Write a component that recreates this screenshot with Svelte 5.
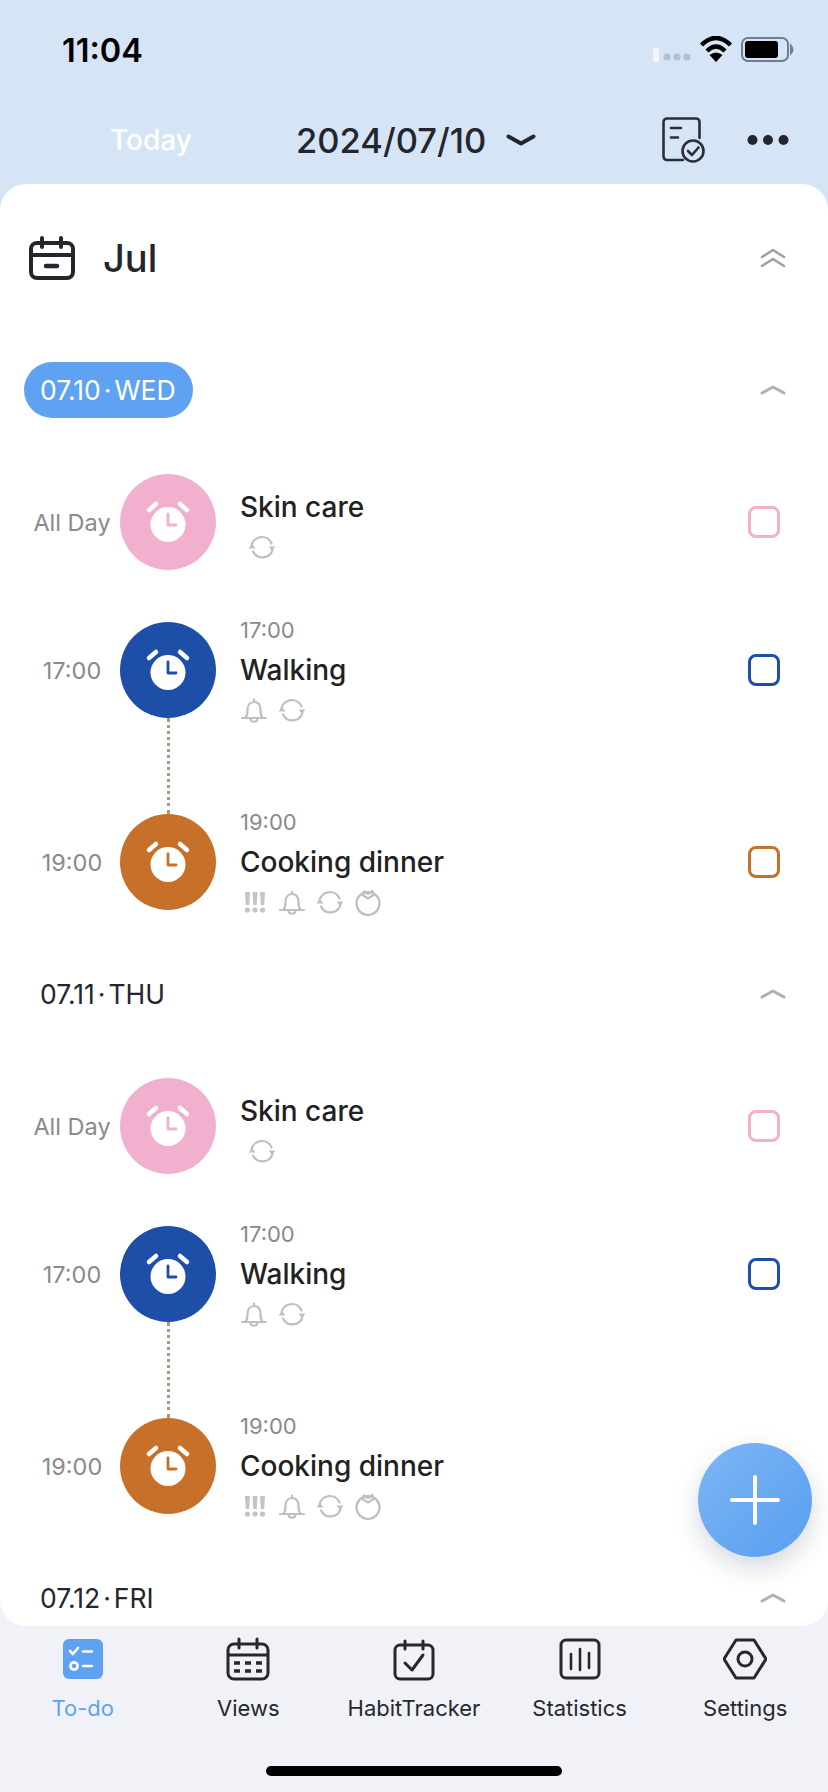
<script>
  const rows = [
    { label: 'All Day', title: 'Skin care', color: '#f2b0cf', icons: ['sync'] },
    { label: '17:00', time: '17:00', title: 'Walking', color: '#1e4fa8', icons: ['bell', 'sync'], linked: true },
    { label: '19:00', time: '19:00', title: 'Cooking dinner', color: '#c6702a', icons: ['urgent', 'bell', 'sync', 'tomato'] }
  ];

  const days = [
    { date: '07.10', day: 'WED', active: true, rows },
    { date: '07.11', day: 'THU', rows },
    { date: '07.12', day: 'FRI', rows: [] }
  ];

  const tabs = ['To-do', 'Views', 'HabitTracker', 'Statistics', 'Settings'];
</script>

{#snippet smallIcon(name)}
  <svg width="28" height="28" viewBox="0 0 28 28" fill="none" stroke="#bfbfbf" stroke-width="2.2" stroke-linecap="round" stroke-linejoin="round">
    {#if name === 'sync'}
      <path d="M3.5 12.5A10.5 10.5 0 0 1 23.5 10.5" />
      <path d="M24.5 17A10.5 10.5 0 0 1 5 18.5" />
      <path d="M20.5 13.5h7l-3.5 4.5z" fill="#bfbfbf" stroke="none" />
      <path d="M0.5 15.5h7l-3.5-4.5z" fill="#bfbfbf" stroke="none" />
    {:else if name === 'bell'}
      <path d="M2 22H26M5.5 22C7 20 7.5 17 7.5 14C7.5 9 10 6 14 6C18 6 20.5 9 20.5 14C20.5 17 21 20 22.5 22M10.5 22C10.5 27 17.5 27 17.5 22M14 3.5V6" />
    {:else if name === 'urgent'}
      <g fill="#c4c4c4" stroke="none">
        <path d="M5 4h5l-.8 13h-3.4zM12.500 4h5l-.8 13h-3.4zM20 4h5l-.8 13h-3.4z" />
        <circle cx="7.500" cy="22" r="2.600" /><circle cx="15" cy="22" r="2.600" /><circle cx="22.500" cy="22" r="2.600" />
      </g>
    {:else}
      <circle cx="14" cy="15.500" r="11.500" />
      <path d="M8.500 7L10 3.500L14 6L18.500 3L19.500 7L14 10.500z" />
    {/if}
  </svg>
{/snippet}

{#snippet tabIcon(name)}
  <svg width="44" height="44" viewBox="0 0 44 44" fill="none" stroke="#26282e" stroke-width="3" stroke-linecap="round" stroke-linejoin="round">
    {#if name === 'To-do'}
      <rect x="2" y="2" width="40" height="40" rx="6" fill="#5fa2f2" stroke="none" />
      <g stroke="#fff" stroke-width="2.600">
        <path d="M9 14l3 3 5-6M22 14.500h9" />
        <circle cx="13" cy="29" r="3.600" />
        <path d="M22 29h9" />
      </g>
    {:else if name === 'Views'}
      <rect x="2" y="7" width="40" height="35" rx="6" />
      <path d="M13 2v9M31 2v9M3 18h38" />
      <path d="M8 26h6M19 26h6M30 26h6M8 34h6M19 34h6M30 34h6" stroke-width="3.400" stroke-linecap="butt" />
    {:else if name === 'HabitTracker'}
      <rect x="3" y="8" width="38" height="34" rx="5" />
      <path d="M13 4v8M31 4v8M13 26l7 7 11-15" />
    {:else if name === 'Statistics'}
      <rect x="3" y="3" width="38" height="38" rx="5" />
      <path d="M13 17v15M22 12v21M31 16v15" stroke-width="2.600" />
    {:else}
      <path d="M13 3H31L43 22L31 41H13L1 22z" />
      <circle cx="22" cy="22" r="7" />
    {/if}
  </svg>
{/snippet}

<div class="page">
  <div class="status">
    <span class="clock">11:04</span>
    <svg width="141" height="26" viewBox="653 36 141 26">
      <rect x="653" y="48" width="6" height="14" rx="2" fill="#f2f6fb" />
      <circle cx="667" cy="57" r="3.600" fill="#b3c0cf" />
      <circle cx="677" cy="57" r="3.600" fill="#b3c0cf" />
      <circle cx="687" cy="57" r="3.600" fill="#b3c0cf" />
      <g fill="none" stroke="#000" stroke-width="4.400">
        <path d="M701.500 45Q716 31 730.500 45" />
        <path d="M707 51Q716 42 725 51" />
      </g>
      <path d="M709.500 55Q716 50 722.500 55L716 62z" />
      <rect x="742" y="38" width="46" height="23" rx="6" fill="none" stroke="#6f7f92" stroke-width="2" />
      <rect x="745" y="41" width="33" height="17" rx="3" />
      <path d="M791 46q3 3.500 0 7z" fill="#6f7f92" stroke="#6f7f92" stroke-width="2" />
    </svg>
  </div>

  <div class="topbar">
    <span class="today">Today</span>
    <span class="date">2024/07/10</span>
    <svg class="date-arrow" width="30" height="12" viewBox="0 0 30 12" fill="none" stroke="#23262e" stroke-width="4" stroke-linecap="round" stroke-linejoin="round">
      <path d="M2.500 2.500L15 9.500L27.500 2.500" />
    </svg>
    <svg class="doc" width="44" height="46" viewBox="0 0 44 46" fill="none" stroke="#2a2e36" stroke-width="2.600" stroke-linecap="round" stroke-linejoin="round">
      <path d="M21 43H5A3.500 3.500 0 0 1 1.500 39.500V5A3.500 3.500 0 0 1 5 1.500H34A3.500 3.500 0 0 1 37.500 5V21" />
      <path d="M9 11h10M9 20.500h7" />
      <circle cx="31" cy="34" r="10.500" />
      <path d="M26 34l4 4 6.500-7.500" />
    </svg>
    <svg class="more" width="42" height="12" viewBox="0 0 42 12" fill="#23262e">
      <circle cx="5.500" cy="6" r="5" /><circle cx="21" cy="6" r="5" /><circle cx="36.500" cy="6" r="5" />
    </svg>
  </div>

  <div class="sheet">
    <div class="month">
      <svg width="48" height="44" viewBox="0 0 48 44" fill="none" stroke="#23262e" stroke-width="4" stroke-linecap="round" stroke-linejoin="round">
        <rect x="3" y="7" width="42" height="35" rx="6" />
        <path d="M14 2v9M33 2v9M3 19h42" />
        <path d="M18 30h11" stroke-width="4.500" />
      </svg>
      <span class="month-name">Jul</span>
      <svg class="chev" width="26" height="20" viewBox="0 0 26 20" fill="none" stroke="#a0a0a0" stroke-width="2.600" stroke-linecap="round" stroke-linejoin="round">
        <path d="M2 9L13 2L24 9M2 18L13 11L24 18" />
      </svg>
    </div>

    {#each days as d}
      <section class="day">
        <div class="day-head">
          <span class="day-label" class:active={d.active}>{d.date}<i>·</i>{d.day}</span>
          <svg class="chev" width="26" height="10" viewBox="0 0 26 10" fill="none" stroke="#b0b0b0" stroke-width="3" stroke-linecap="round" stroke-linejoin="round">
            <path d="M2 8L13 2L24 8" />
          </svg>
        </div>

        {#each d.rows as r}
          <div class="row">
            <span class="row-label">{r.label}</span>
            <div class="bubble" style="background:{r.color}">
              <svg width="96" height="96" viewBox="0 0 96 96" fill="none" stroke-linecap="round">
                <path d="M29 36L36 30M67 36L60 30" stroke="#fff" stroke-width="4.500" />
                <circle cx="48" cy="50.500" r="17.500" fill="#fff" />
                <path d="M48 40V51H56" stroke={r.color} stroke-width="2.800" stroke-linejoin="round" />
              </svg>
            </div>
            <div class="text" class:plain={!r.time}>
              {#if r.time}<span class="time">{r.time}</span>{/if}
              <span class="title">{r.title}</span>
              <div class="marks" class:indent={!r.time}>
                {#each r.icons as name}
                  {@render smallIcon(name)}
                {/each}
              </div>
            </div>
            <span class="check" style="border-color:{r.color}"></span>
          </div>
          {#if r.linked}
            <div class="link"></div>
          {/if}
        {/each}
      </section>
    {/each}
  </div>

  <nav class="tabs">
    {#each tabs as t, i}
      <div class="tab" class:on={i === 0}>
        {@render tabIcon(t)}
        <span>{t}</span>
      </div>
    {/each}
  </nav>
  <div class="home"><span></span></div>

  <button class="fab" aria-label="Add">
    <svg width="52" height="52" viewBox="0 0 52 52" stroke="#fff" stroke-width="4" stroke-linecap="round">
      <path d="M26 3V49M3 26H49" />
    </svg>
  </button>
</div>

<style>
  :global(body) {
    margin: 0;
  }

  .page {
    position: relative;
    width: 828px;
    height: 1792px;
    display: flex;
    flex-direction: column;
    overflow: hidden;
    font-family: Inter, "Noto Sans", sans-serif;
    color: #23262e;
    background: linear-gradient(#d6e5f6 50%, #f0f2f7 50%);
  }

  .status {
    height: 96px;
    flex: none;
    display: flex;
    justify-content: space-between;
    align-items: flex-start;
    box-sizing: border-box;
    padding: 35px 34px 0 62px;
  }

  .status svg {
    margin-top: 1px;
  }

  .clock {
    font-size: 32.500px;
    line-height: 32px;
    font-weight: 600;
    color: #000;
  }

  .topbar {
    height: 88px;
    flex: none;
    display: flex;
    align-items: center;
    padding: 0 39px 0 110px;
  }

  .today {
    width: 186px;
    font-size: 28px;
    font-weight: 500;
    color: #fff;
  }

  .date {
    font-size: 34.500px;
    font-weight: 500;
  }

  .date-arrow {
    margin-left: 20px;
  }

  .doc {
    margin-left: auto;
    margin-right: 41px;
  }

  .sheet {
    flex: 1;
    min-height: 0;
    overflow: hidden;
    background: #fff;
    border-radius: 26px;
    padding: 0 42px 0 24px;
  }

  .month {
    margin: 44px 0 74px 4px;
    height: 60px;
    display: flex;
    align-items: center;
    gap: 27px;
  }

  .month-name {
    font-size: 38px;
    font-weight: 500;
    color: #23262e;
  }

  .chev {
    margin-left: auto;
    flex: none;
  }

  .day {
    margin-bottom: 56px;
  }

  .day-head {
    height: 56px;
    margin-bottom: 56px;
    display: flex;
    align-items: center;
  }

  .day-label {
    height: 56px;
    line-height: 56px;
    padding: 0 17px 0 16px;
    border-radius: 28px;
    font-size: 26.500px;
    color: #23262e;
  }

  .day-label i {
    font-style: normal;
    margin: 0 3px;
  }

  .day-label.active {
    background: #5fa2f2;
    color: #fff;
  }

  .row {
    height: 96px;
    display: flex;
    align-items: center;
  }

  .row + .row {
    margin-top: 52px;
  }

  .row-label {
    width: 96px;
    flex: none;
    text-align: center;
    font-size: 23.500px;
    color: #8a8a8a;
  }

  .bubble {
    width: 96px;
    height: 96px;
    flex: none;
    border-radius: 50%;
  }

  .bubble svg {
    display: block;
  }

  .text {
    flex: 1;
    margin-left: 24px;
    display: flex;
    flex-direction: column;
    align-items: flex-start;
  }

  .text.plain {
    padding-top: 9px;
  }

  .time,
  .title,
  .marks {
    height: 40px;
    line-height: 40px;
  }

  .time {
    font-size: 22px;
    color: #8a8a8a;
  }

  .title {
    font-size: 28px;
    font-weight: 450;
    color: #222;
  }

  .marks {
    display: flex;
    align-items: center;
    gap: 10px;
  }

  .marks.indent {
    margin-left: 8px;
  }

  .check {
    width: 32px;
    height: 32px;
    flex: none;
    box-sizing: border-box;
    margin-right: 6px;
    border: 3px solid;
    border-radius: 8px;
  }

  .link {
    width: 0;
    height: 96px;
    margin-left: 143px;
    border-left: 3px dotted #a89a80;
  }

  .tabs {
    flex: none;
    display: flex;
    padding-top: 11px;
  }

  .tab {
    flex: 1;
    display: flex;
    flex-direction: column;
    align-items: center;
    font-size: 22px;
    line-height: 28px;
    color: #26282e;
  }

  .tab span {
    margin-top: 13px;
  }

  .tab.on {
    color: #5fa2f2;
  }

  .home {
    height: 70px;
    flex: none;
    box-sizing: border-box;
    padding-top: 44px;
    display: flex;
    justify-content: center;
  }

  .home span {
    width: 296px;
    height: 10px;
    border-radius: 5px;
    background: #000;
  }

  .fab {
    position: absolute;
    left: 698px;
    top: 1443px;
    width: 114px;
    height: 114px;
    padding: 0;
    border: none;
    border-radius: 50%;
    background: linear-gradient(135deg, #7db6f5, #589ef0);
    box-shadow: 0 10px 26px rgba(40, 60, 90, 0.2);
    display: flex;
    align-items: center;
    justify-content: center;
  }
</style>
